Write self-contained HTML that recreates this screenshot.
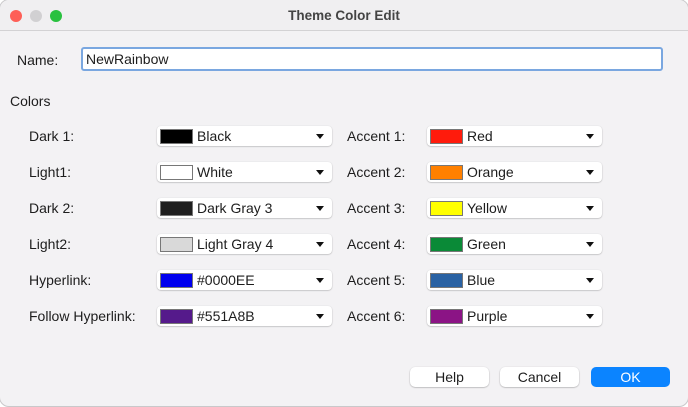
<!DOCTYPE html>
<html><head><style>
body{margin:0;width:688px;height:406px;overflow:hidden;background:#fff;font-family:"Liberation Sans",sans-serif;font-size:14px;color:#1d1d1d}
.win{position:absolute;left:-1px;top:-1px;width:688px;height:406px;background:#f3f2f4;border:1px solid #c9c8ca;border-radius:10px;overflow:hidden}
.tb{position:absolute;left:0;top:0;width:100%;height:30px;border-bottom:1px solid #d3d2d4;background:#f0eff1}
.dot{position:absolute;top:10px;width:12px;height:12px;border-radius:50%}
.title{position:absolute;top:8px;left:0;width:100%;text-align:center;font-weight:bold;font-size:13.5px;color:#444}
.t{position:absolute;white-space:nowrap}
.inp{position:absolute;left:81px;top:47px;width:578px;height:20px;background:#fff;border:2px solid #7aa7e0;border-radius:3px}
.cb{position:absolute;width:175px;height:20px;background:#fff;border-radius:4px;box-shadow:0 0.5px 1.5px rgba(0,0,0,.3)}
.sw{position:absolute;left:3px;top:3px;width:31px;height:13px;border:1px solid #777}
.cb .l{position:absolute;left:40px;top:2px}
.ar{position:absolute;right:8px;top:8px;width:0;height:0;border-left:4.5px solid transparent;border-right:4.5px solid transparent;border-top:5px solid #111}
.btn{position:absolute;top:367px;width:79px;height:20px;background:#fff;border-radius:5px;box-shadow:0 0.5px 1.5px rgba(0,0,0,.35);text-align:center;line-height:20px}
</style></head><body><div class="win">
<div class="tb"><div class="dot" style="left:10px;background:#fe5f57"></div><div class="dot" style="left:30px;background:#d1d0d2"></div><div class="dot" style="left:50px;background:#29c13f"></div><div class="title">Theme Color Edit</div></div>
<div class="t" style="left:17px;top:52px">Name:</div>
<div class="inp"><span class="t" style="left:3px;top:2px">NewRainbow</span></div>
<div class="t" style="left:10px;top:93px">Colors</div>

<div class="t" style="left:29px;top:128px">Dark 1:</div>
<div class="t" style="left:29px;top:164px">Light1:</div>
<div class="t" style="left:29px;top:200px">Dark 2:</div>
<div class="t" style="left:29px;top:236px">Light2:</div>
<div class="t" style="left:29px;top:272px">Hyperlink:</div>
<div class="t" style="left:29px;top:308px">Follow Hyperlink:</div>
<div class="t" style="left:347px;top:128px">Accent 1:</div>
<div class="t" style="left:347px;top:164px">Accent 2:</div>
<div class="t" style="left:347px;top:200px">Accent 3:</div>
<div class="t" style="left:347px;top:236px">Accent 4:</div>
<div class="t" style="left:347px;top:272px">Accent 5:</div>
<div class="t" style="left:347px;top:308px">Accent 6:</div>

<div class="cb" style="left:157px;top:126px"><div class="sw" style="background:#000"></div><span class="l">Black</span><div class="ar"></div></div>
<div class="cb" style="left:157px;top:162px"><div class="sw" style="background:#fff"></div><span class="l">White</span><div class="ar"></div></div>
<div class="cb" style="left:157px;top:198px"><div class="sw" style="background:#1f1f1f"></div><span class="l">Dark Gray 3</span><div class="ar"></div></div>
<div class="cb" style="left:157px;top:234px"><div class="sw" style="background:#d9d9d9"></div><span class="l">Light Gray 4</span><div class="ar"></div></div>
<div class="cb" style="left:157px;top:270px"><div class="sw" style="background:#0000ee"></div><span class="l">#0000EE</span><div class="ar"></div></div>
<div class="cb" style="left:157px;top:306px"><div class="sw" style="background:#551a8b"></div><span class="l">#551A8B</span><div class="ar"></div></div>

<div class="cb" style="left:427px;top:126px"><div class="sw" style="background:#ff1b0c"></div><span class="l">Red</span><div class="ar"></div></div>
<div class="cb" style="left:427px;top:162px"><div class="sw" style="background:#ff8000"></div><span class="l">Orange</span><div class="ar"></div></div>
<div class="cb" style="left:427px;top:198px"><div class="sw" style="background:#ffff00"></div><span class="l">Yellow</span><div class="ar"></div></div>
<div class="cb" style="left:427px;top:234px"><div class="sw" style="background:#0a8a37"></div><span class="l">Green</span><div class="ar"></div></div>
<div class="cb" style="left:427px;top:270px"><div class="sw" style="background:#2a62a3"></div><span class="l">Blue</span><div class="ar"></div></div>
<div class="cb" style="left:427px;top:306px"><div class="sw" style="background:#8b1485"></div><span class="l">Purple</span><div class="ar"></div></div>

<div class="btn" style="left:410px">Help</div>
<div class="btn" style="left:500px">Cancel</div>
<div class="btn" style="left:591px;background:#0b84ff;color:#fff;box-shadow:none">OK</div>
</div></body></html>
